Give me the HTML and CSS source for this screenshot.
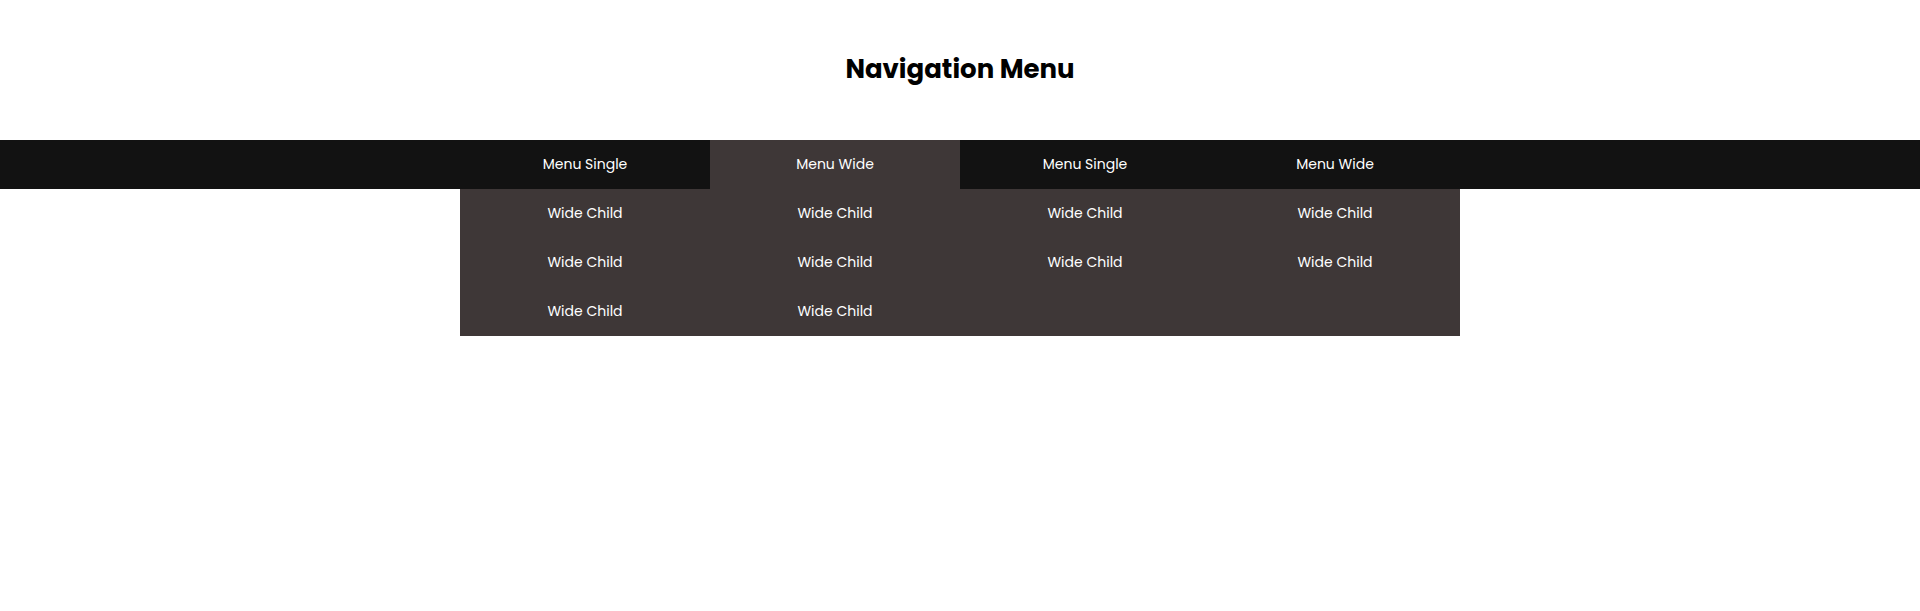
FILE: index.html
```html
<!DOCTYPE html>
<html lang="en">
<head>
<meta charset="utf-8">
<title>Navigation Menu</title>
<link rel="stylesheet" href="styles.css">
</head>
<body>
  <header class="page-header">
    <h1 class="title">Navigation Menu</h1>
  </header>
  <nav class="navbar">
    <div class="navbar-inner">
      <ul class="menu">
        <li class="menu-item">Menu Single</li>
        <li class="menu-item active">Menu Wide</li>
        <li class="menu-item">Menu Single</li>
        <li class="menu-item">Menu Wide</li>
      </ul>
    </div>
  </nav>
  <div class="mega-wrap">
    <div class="mega">
      <a class="mega-item">Wide Child</a>
      <a class="mega-item">Wide Child</a>
      <a class="mega-item">Wide Child</a>
      <a class="mega-item">Wide Child</a>
      <a class="mega-item">Wide Child</a>
      <a class="mega-item">Wide Child</a>
      <a class="mega-item">Wide Child</a>
      <a class="mega-item">Wide Child</a>
      <a class="mega-item">Wide Child</a>
      <a class="mega-item">Wide Child</a>
    </div>
  </div>
</body>
</html>
```
FILE: styles.css
```css
* { box-sizing: border-box; }
html, body { margin: 0; padding: 0; background: #fff; }
body { font-family: "Poppins", "Open Sans", "Liberation Sans", sans-serif; }

.page-header {
  height: 140px;
  display: flex;
  justify-content: center;
  padding-top: 51px;
}
.title {
  margin: 0;
  font-size: 26px;
  line-height: 36px;
  font-weight: 700;
  color: #000;
}

.navbar {
  background: #121212;
  height: 49px;
  display: flex;
  justify-content: center;
}
.navbar-inner { width: 1000px; }
.menu {
  list-style: none;
  margin: 0;
  padding: 0;
  display: flex;
}
.menu-item {
  width: 250px;
  height: 49px;
  display: flex;
  align-items: center;
  justify-content: center;
  color: #fff;
  font-size: 14px;
}
.menu-item.active { background: #3e3737; }

.mega-wrap {
  display: flex;
  justify-content: center;
}
.mega {
  width: 1000px;
  background: #3e3737;
  display: grid;
  grid-template-columns: repeat(4, 250px);
  grid-auto-rows: 49px;
}
.mega-item {
  display: flex;
  align-items: center;
  justify-content: center;
  color: #fff;
  font-size: 14px;
}
```
